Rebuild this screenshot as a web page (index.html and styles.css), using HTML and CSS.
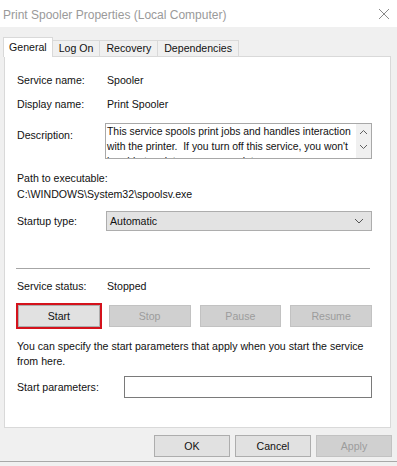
FILE: index.html
```html
<!DOCTYPE html>
<html lang="en">
<head>
<meta charset="UTF-8">
<title>Print Spooler Properties (Local Computer)</title>
<link rel="stylesheet" href="styles.css">
</head>
<body>
<div class="window">
  <div class="titlebar">
    <span class="title">Print Spooler Properties (Local Computer)</span>
    <svg class="close" width="12" height="12" viewBox="0 0 12 12">
      <path d="M1 1 L11 11 M11 1 L1 11" stroke="#8a8a8a" stroke-width="1" fill="none"/>
    </svg>
  </div>

  <div class="body">
    <div class="tabs">
      <div class="tab active">General</div>
      <div class="tab">Log On</div>
      <div class="tab">Recovery</div>
      <div class="tab">Dependencies</div>
    </div>

    <div class="panel">
      <div class="row">
        <span class="label">Service name:</span>
        <span>Spooler</span>
      </div>
      <div class="row row-name">
        <span class="label">Display name:</span>
        <span>Print Spooler</span>
      </div>
      <div class="row row-desc">
        <span class="label label-desc">Description:</span>
        <div class="desc">
          <div class="desc-text">
            <div>This service spools print jobs and handles interaction</div>
            <div>with the printer.&nbsp; If you turn off this service, you won't</div>
            <div>be able to print or see your printers.</div>
          </div>
          <div class="scroll">
            <svg width="9" height="6" viewBox="0 0 9 6"><path d="M1 5 L4.5 1.5 L8 5" stroke="#606060" fill="none"/></svg>
            <svg width="9" height="6" viewBox="0 0 9 6"><path d="M1 1 L4.5 4.5 L8 1" stroke="#606060" fill="none"/></svg>
          </div>
        </div>
      </div>

      <div class="path-label">Path to executable:</div>
      <div class="path">C:\WINDOWS\System32\spoolsv.exe</div>

      <div class="row row-startup">
        <span class="label">Startup type:</span>
        <div class="select">
          <span>Automatic</span>
          <svg width="10" height="6" viewBox="0 0 10 6"><path d="M1 1 L5 5 L9 1" stroke="#555" fill="none"/></svg>
        </div>
      </div>

      <div class="separator"></div>

      <div class="row row-status">
        <span class="label">Service status:</span>
        <span>Stopped</span>
      </div>

      <div class="actions">
        <button class="btn btn-start">Start</button>
        <button class="btn" disabled>Stop</button>
        <button class="btn" disabled>Pause</button>
        <button class="btn" disabled>Resume</button>
      </div>

      <p class="note">You can specify the start parameters that apply when you start the service from here.</p>

      <div class="row row-params">
        <span class="label label-params">Start parameters:</span>
        <div class="input"></div>
      </div>
    </div>

    <div class="footer">
      <button class="btn btn-footer">OK</button>
      <button class="btn btn-footer">Cancel</button>
      <button class="btn btn-footer" disabled>Apply</button>
    </div>
  </div>
</div>
</body>
</html>
```

FILE: styles.css
```css
body {
    margin: 0;
    font-family: "Liberation Sans", Arial, sans-serif;
    font-size: 10.6px;
    color: #111;
    background: #f0f0f0;
}
.window {
    width: 397px;
    height: 466px;
    display: flex;
    flex-direction: column;
    overflow: hidden;
}

/* title bar */
.titlebar {
    height: 27px;
    background: #fff;
    display: flex;
    align-items: center;
    justify-content: space-between;
    padding: 0 7px 0 3px;
}
.title {
    font-size: 12px;
    color: #9a9a9a;
    margin-top: 2px;
}
.close {
    margin-top: 1px;
}

.body {
    flex: 1;
    background: #f0f0f0;
    padding-top: 10px;
    border-bottom: 1px solid #a8a8a8;
    margin-bottom: 4px;
}

/* tabs */
.tabs {
    display: flex;
    align-items: flex-end;
    height: 19px;
    margin-left: 3px;
}
.tab {
    height: 16px;
    line-height: 15px;
    padding: 0 6px;
    border: 1px solid #d9d9d9;
    border-bottom: none;
    border-left: none;
    box-sizing: border-box;
    background: #f0f0f0;
}
.tab.active {
    height: 20px;
    line-height: 18px;
    padding: 0 5px;
    background: #fff;
    border-left: 1px solid #d9d9d9;
    margin-bottom: -1px;
    position: relative;
    z-index: 1;
}

/* main panel */
.panel {
    margin: 0 6px 0 4px;
    height: 372px;
    box-sizing: border-box;
    background: #fff;
    border: 1px solid #d9d9d9;
    padding: 15px 18px 0 12px;
}
.row {
    display: flex;
    align-items: center;
    line-height: 16px;
}
.label {
    width: 90px;
    flex-shrink: 0;
}
.row-name {
    margin-top: 8px;
}
.row-desc {
    margin-top: 11px;
    align-items: flex-start;
}
.label-desc {
    margin-top: 4px;
    width: 88px;
}
.desc {
    flex: 1;
    height: 36px;
    border: 1px solid #a8a8a8;
    box-sizing: border-box;
    display: flex;
    overflow: hidden;
}
.desc-text {
    flex: 1;
    padding: 0 0 0 1px;
    font-size: 10.4px;
    line-height: 15px;
    white-space: nowrap;
    overflow: hidden;
}
.scroll {
    width: 15px;
    flex-shrink: 0;
    background: #f0f0f0;
    display: flex;
    flex-direction: column;
    align-items: center;
    justify-content: space-between;
    padding: 5px 0 8px;
}

.path-label {
    margin-top: 11px;
    line-height: 16px;
}
.path {
    line-height: 16px;
}

.row-startup {
    margin-top: 9px;
}
.select {
    flex: 1;
    height: 20px;
    margin-left: -1px;
    box-sizing: border-box;
    border: 1px solid #adadad;
    background: #e3e3e3;
    display: flex;
    align-items: center;
    justify-content: space-between;
    padding: 0 7px 0 3px;
}

.separator {
    margin-top: 37px;
    margin-left: -1px;
    margin-right: 2px;
    border-top: 1px solid #a6a6a6;
}

.row-status {
    margin-top: 9px;
}

/* buttons */
.actions {
    margin-top: 11px;
    margin-left: 1px;
    display: grid;
    grid-template-columns: repeat(4, 1fr);
    column-gap: 9px;
}
.btn {
    font-family: inherit;
    font-size: 10.6px;
    height: 22px;
    padding: 0;
    background: #e1e1e1;
    border: 1px solid #adadad;
    color: #111;
}
.btn:disabled {
    background: #d0d0d0;
    border-color: #c2c2c2;
    color: #9c9c9c;
}
.btn-start {
    outline: 2px solid #d4121c;
    outline-offset: 0;
}

.note {
    margin: 12px 0 0;
    line-height: 15px;
}

.row-params {
    margin-top: 7px;
}
.label-params {
    width: 107px;
}
.input {
    flex: 1;
    height: 22px;
    box-sizing: border-box;
    border: 1px solid #7a7a7a;
    background: #fff;
}

/* dialog buttons */
.footer {
    display: flex;
    justify-content: flex-end;
    gap: 5px;
    margin: 7px 5px 0 0;
}
.btn-footer {
    width: 76px;
}
```
